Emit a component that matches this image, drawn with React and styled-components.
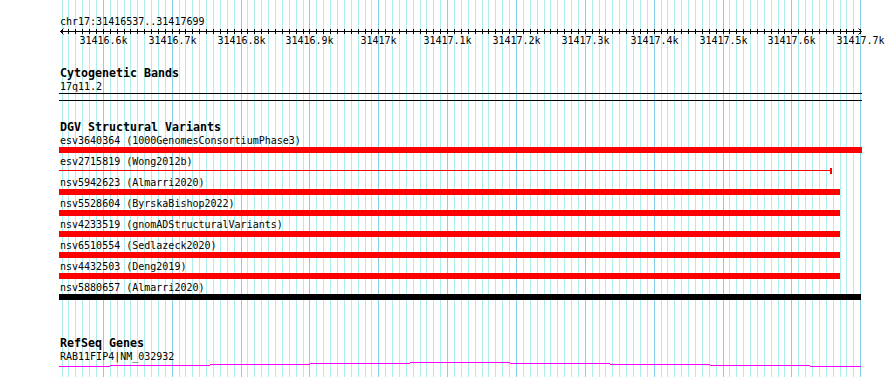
import React from 'react';
import styled, { createGlobalStyle } from 'styled-components';

const GlobalStyle = createGlobalStyle`
  html, body { margin: 0; padding: 0; background: #ffffff; }
  body { font-family: "DejaVu Sans Mono", "Liberation Mono", monospace; color: #000; }
`;

const START = 31416537;
const PANEL_LEFT = 59;
const PANEL_WIDTH = 803;
const colOf = (pos) => Math.floor(60 + (pos - START) * 0.6885) - PANEL_LEFT;

const minorPositions = [];
for (let p = 31416540; p <= 31417700; p += 10) minorPositions.push(p);
const majorPositions = minorPositions.filter((p) => p % 100 === 0);

const fmtK = (pos) => {
  const whole = Math.floor(pos / 1000);
  const rest = pos % 1000;
  return rest ? `${whole}.${rest / 100}k` : `${whole}k`;
};

const variants = [
  { id: 'esv3640364', src: '1000GenomesConsortiumPhase3', kind: 'bar', width: 803, color: '#ff0000' },
  { id: 'esv2715819', src: 'Wong2012b', kind: 'line', width: 771, color: '#ff0000' },
  { id: 'nsv5942623', src: 'Almarri2020', kind: 'bar', width: 781, color: '#ff0000' },
  { id: 'nsv5528604', src: 'ByrskaBishop2022', kind: 'bar', width: 781, color: '#ff0000' },
  { id: 'nsv4233519', src: 'gnomADStructuralVariants', kind: 'bar', width: 781, color: '#ff0000' },
  { id: 'nsv6510554', src: 'Sedlazeck2020', kind: 'bar', width: 781, color: '#ff0000' },
  { id: 'nsv4432503', src: 'Deng2019', kind: 'bar', width: 781, color: '#ff0000' },
  { id: 'nsv5880657', src: 'Almarri2020', kind: 'bar', width: 802, color: '#000000' },
];

const geneSegments = [
  [0, 51, 4], [51, 151, 3], [151, 251, 2], [251, 351, 1], [351, 451, 0],
  [451, 551, 1], [551, 651, 2], [651, 751, 3], [751, 802, 4],
];

const Page = styled.div`
  width: 890px;
  height: 377px;
  padding-left: ${PANEL_LEFT}px;
  box-sizing: border-box;
  overflow: hidden;
  background: #fff;
`;

const Panel = styled.div`
  position: relative;
  width: ${PANEL_WIDTH}px;
  height: 377px;
`;

const GridLayer = styled.svg`
  position: absolute;
  top: 0;
  left: 0;
  z-index: 0;
  display: block;
  shape-rendering: crispEdges;
`;

const Content = styled.div`
  position: relative;
  z-index: 1;
  display: flex;
  flex-direction: column;
  padding-top: 15px;
`;

const PlainText = styled.div`
  height: ${(p) => p.$h || 13}px;
  padding-left: 1px;
  font-family: "DejaVu Sans Mono", "Liberation Mono", monospace;
  font-size: 10px;
  line-height: 13px;
  white-space: nowrap;
  color: #000;
`;

const TrackTitle = styled.div`
  height: 13px;
  padding-left: 1px;
  font-family: "DejaVu Sans Mono", "Liberation Mono", monospace;
  font-weight: bold;
  font-size: 11.63px;
  line-height: 13px;
  white-space: nowrap;
  color: #000;
`;

const RulerSvg = styled.svg`
  display: block;
  overflow: visible;
  shape-rendering: crispEdges;
`;

const Track = styled.section`
  display: flex;
  flex-direction: column;
  margin-top: ${(p) => p.$gap}px;
`;

const BandBox = styled.div`
  width: ${PANEL_WIDTH}px;
  height: 8px;
  box-sizing: border-box;
  border-top: 1px solid #000;
  border-bottom: 1px solid #000;
`;

const VariantRow = styled.div`
  display: flex;
  flex-direction: column;
  height: 21px;
`;

const FeatureLane = styled.div`
  display: flex;
  align-items: flex-start;
  height: 6px;
`;

const SolidBar = styled.div`
  height: 6px;
  flex: none;
  background: ${(p) => p.$color};
`;

const ThinLine = styled.div`
  height: 1px;
  margin-top: 2px;
  flex: none;
  background: ${(p) => p.$color};
`;

const EndCap = styled.div`
  width: 2px;
  height: 6px;
  flex: none;
  background: ${(p) => p.$color};
`;

const GeneSvg = styled.svg`
  display: block;
  shape-rendering: crispEdges;
`;

function Grid() {
  return (
    <GridLayer width={PANEL_WIDTH} height={377}>
      {minorPositions.map((p) => (
        <rect
          key={p}
          x={colOf(p)}
          y={0}
          width={1}
          height={377}
          fill={p % 100 === 0 ? '#87ceeb' : '#afeeee'}
        />
      ))}
    </GridLayer>
  );
}

function Ruler() {
  return (
    <RulerSvg width={PANEL_WIDTH} height={18}>
      <rect x={1} y={3} width={801} height={1} fill="#000" />
      {minorPositions.map((p) => (
        <rect key={p} x={colOf(p)} y={1} width={1} height={5} fill="#000" />
      ))}
      <polyline points="4.5,0.5 1.5,3.5 4.5,6.5" fill="none" stroke="#000" strokeWidth="1" shapeRendering="auto" />
      <polyline points="799.5,0.5 802.5,3.5 799.5,6.5" fill="none" stroke="#000" strokeWidth="1" shapeRendering="auto" />
      {majorPositions.map((p) => (
        <text
          key={p}
          x={colOf(p) + 0.5}
          y={16}
          textAnchor="middle"
          fontFamily='"DejaVu Sans Mono", "Liberation Mono", monospace'
          fontSize="10"
          fill="#000"
        >
          {fmtK(p)}
        </text>
      ))}
    </RulerSvg>
  );
}

function Variant({ v }) {
  return (
    <VariantRow>
      <PlainText>{`${v.id} (${v.src})`}</PlainText>
      <FeatureLane>
        {v.kind === 'bar' ? (
          <SolidBar $color={v.color} style={{ width: v.width }} />
        ) : (
          <>
            <ThinLine $color={v.color} style={{ width: v.width }} />
            <EndCap $color={v.color} />
          </>
        )}
      </FeatureLane>
    </VariantRow>
  );
}

export default function App() {
  return (
    <>
      <GlobalStyle />
      <Page>
        <Panel>
          <Grid />
          <Content>
            <PlainText>chr17:31416537..31417699</PlainText>
            <Ruler />

            <Track $gap={21}>
              <TrackTitle>Cytogenetic Bands</TrackTitle>
              <PlainText>17q11.2</PlainText>
              <BandBox />
            </Track>

            <Track $gap={20}>
              <TrackTitle>DGV Structural Variants</TrackTitle>
              {variants.map((v) => (
                <Variant key={v.id + v.src} v={v} />
              ))}
            </Track>

            <Track $gap={35}>
              <TrackTitle>RefSeq Genes</TrackTitle>
              <PlainText $h={12}>RAB11FIP4|NM_032932</PlainText>
              <GeneSvg width={PANEL_WIDTH} height={5}>
                {geneSegments.map(([x1, x2, y]) => (
                  <rect key={x1} x={x1} y={y} width={x2 - x1} height={1} fill="#ff00ff" />
                ))}
              </GeneSvg>
            </Track>
          </Content>
        </Panel>
      </Page>
    </>
  );
}
